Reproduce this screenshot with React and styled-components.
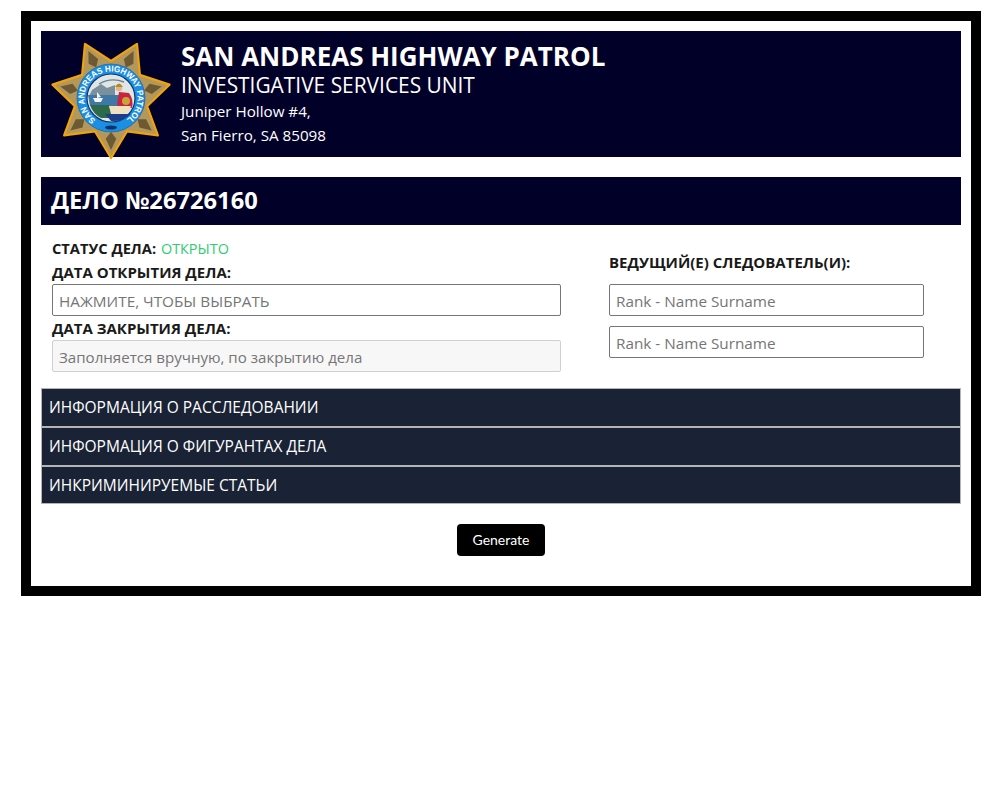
import React from 'react';
import styled, { createGlobalStyle } from 'styled-components';

const GlobalStyle = createGlobalStyle`
html, body {
  margin: 0;
  padding: 0;
  background: #fff;
}
body {
  font-family: "Open Sans", "Noto Sans", sans-serif;
  color: #1a1a1a;
}
`

const Frame = styled.div`
width: 960px;
margin: 11px 0 0 21px;
box-sizing: border-box;
border: 10px solid #000;
background: #fff;
padding: 10px 10px 30px;
`

const Header = styled.header`
height: 126px;
background: #000028;
display: flex;
color: #fff;
`

const Badge = styled.svg`
flex: none;
width: 120px;
height: 122px;
margin: 7px 10px 0 10px;
`

const HeaderText = styled.div`
display: flex;
flex-direction: column;
padding-top: 10px;
`

const Agency = styled.h1`
margin: 0;
font-size: 26px;
line-height: 31px;
font-weight: 700;
`

const Unit = styled.h2`
margin: 0 0 1px;
font-size: 20.9px;
line-height: 26px;
font-weight: 400;
`

const Address = styled.div`
font-size: 15.2px;
line-height: 24px;
`

const CaseBar = styled.h3`
margin: 20px 0 0;
height: 48px;
background: #000028;
color: #fff;
font-size: 23.7px;
line-height: 47px;
font-weight: 700;
padding-left: 10px;
`

const CaseInfo = styled.section`
display: grid;
grid-template-columns: 509px 315px;
column-gap: 48px;
padding: 12px 0 0 11px;
`

const Column = styled.div`
display: flex;
flex-direction: column;
`

const Line = styled.div`
font-size: ${props => props.$size || 15}px;
line-height: ${props => props.$leading || 24}px;
font-weight: 700;
height: ${props => props.$height || 24}px;
`

const Status = styled.span`
margin-left: 1px;
font-weight: 400;
font-size: 14.4px;
color: #2ecc71;
`

const Field = styled.input`
display: block;
box-sizing: border-box;
width: 100%;
height: 32px;
margin: 0;
padding: 2px 6px 0;
border: 1px solid #767676;
border-radius: 2px;
background: #fff;
font-family: inherit;
font-size: 15.3px;
margin-bottom: ${props => props.$gap || 0}px;

&::placeholder {
  color: #757575;
  opacity: 1;
}

&:disabled {
  background: #f7f7f7;
  border-color: #d0d0d0;
  font-size: 15.1px;
}
`

const RightLabel = styled(Line)`
margin-top: 14px;
height: 33px;
`

const Accordion = styled.div`
margin-top: 16px;
display: flex;
flex-direction: column;
`

const AccordionRow = styled.div`
box-sizing: border-box;
height: ${props => props.$last ? 38 : 39}px;
background: #1a2335;
border: 1px solid #b4b4b4;
color: #fff;
font-size: 15.5px;
line-height: 36px;
padding-left: 7px;
`

const Actions = styled.div`
display: flex;
justify-content: center;
padding-top: 20px;
`

const GenerateButton = styled.button`
width: 88px;
height: 32px;
border: 0;
border-radius: 4px;
background: #000;
color: #fff;
font-family: Lato, sans-serif;
font-size: 14px;
line-height: 30px;
padding: 0;
`

const CX = 60;
const CY = 60;

const polar = (r, a) => `${(CX + r * Math.cos(a)).toFixed(1)},${(CY + r * Math.sin(a)).toFixed(1)}`;

const starPoints = Array.from({ length: 14 }, (_, i) =>
  polar(i % 2 === 0 ? 60 : 37, Math.PI / 2 + (i * Math.PI) / 7)
).join(' ');

// dark creases in the middle of each arm of the star
const creases = Array.from({ length: 7 }, (_, i) => {
  const a = Math.PI / 2 + (i * 2 * Math.PI) / 7;
  return [polar(34, a), polar(41, a + 0.13), polar(52, a), polar(41, a - 0.13)].join(' ');
});

const HighwayBadge = () => (
  <Badge viewBox="0 0 120 122">
    <defs>
      <path id="ringText" d="M 44.8 81.7 A 26.5 26.5 0 1 1 75.2 81.7" />
    </defs>
    <polygon points={starPoints} fill="#b4975a" stroke="#efa30c" strokeWidth="2.2" strokeLinejoin="round" />
    {creases.map((points, i) => (
      <polygon key={i} points={points} fill="#3e3018" opacity="0.6" />
    ))}
    <circle cx="60" cy="60" r="34" fill="#1a8fe3" stroke="#0c5aa8" strokeWidth="0.6" />
    <text fontFamily="Liberation Sans, sans-serif" fontSize="8.6" fontWeight="700" fill="#fff">
      <textPath href="#ringText" textLength="133" lengthAdjust="spacingAndGlyphs">SAN ANDREAS HIGHWAY PATROL</textPath>
    </text>
    <ellipse cx="60" cy="89.5" rx="6" ry="2" fill="#0a3568" />
    <circle cx="60" cy="60" r="24" fill="#dfe6e4" stroke="#12356e" strokeWidth="1.2" />
    <path d="M41 52 L50 46 L56 50 L64 47 L64 58 L38 58 Z" fill="#7b8f9c" />
    <path d="M37 57 H70 V68 H39 Z" fill="#3f77a6" />
    <path d="M42 60 L52 60 L50 64 L44 64 Z" fill="#f4f6f6" />
    <path d="M46 60 V54 L50 59 Z" fill="#f4f6f6" />
    <path d="M39 67 H58 L62 80 H50 Q42 76 39 67 Z" fill="#2c6a4a" />
    <path d="M68 54 L78 55 Q83 62 81 70 L66 68 Z" fill="#c8243c" />
    <path d="M58 68 H80 L76 76 H60 Z" fill="#efe2c0" />
    <path d="M54 76 H80 Q72 84 60 83 Z" fill="#1d3f8a" />
    <circle cx="68" cy="50" r="3.2" fill="#e3b48a" />
    <path d="M64 49 Q68 42 72 49 Z" fill="#b58a1c" />
    <circle cx="75" cy="63" r="4" fill="#c9a23a" />
    <path d="M48 46 Q60 39 73 44" fill="none" stroke="#6a7f9a" strokeWidth="1.4" />
  </Badge>
);

export default function App() {
  return (
    <>
      <GlobalStyle />
      <Frame>
        <Header>
          <HighwayBadge />
          <HeaderText>
            <Agency>SAN ANDREAS HIGHWAY PATROL</Agency>
            <Unit>INVESTIGATIVE SERVICES UNIT</Unit>
            <Address>Juniper Hollow #4,</Address>
            <Address>San Fierro, SA 85098</Address>
          </HeaderText>
        </Header>
        <CaseBar>ДЕЛО №26726160</CaseBar>
        <CaseInfo>
          <Column>
            <Line $size={14.7} $leading={22}>СТАТУС ДЕЛА: <Status>ОТКРЫТО</Status></Line>
            <Line $height={23} $leading={22}>ДАТА ОТКРЫТИЯ ДЕЛА:</Line>
            <Field placeholder="НАЖМИТЕ, ЧТОБЫ ВЫБРАТЬ" />
            <Line>ДАТА ЗАКРЫТИЯ ДЕЛА:</Line>
            <Field disabled placeholder="Заполняется вручную, по закрытию дела" />
          </Column>
          <Column>
            <RightLabel $leading={22}>ВЕДУЩИЙ(Е) СЛЕДОВАТЕЛЬ(И):</RightLabel>
            <Field $gap={10} placeholder="Rank - Name Surname" />
            <Field placeholder="Rank - Name Surname" />
          </Column>
        </CaseInfo>
        <Accordion>
          <AccordionRow>ИНФОРМАЦИЯ О РАССЛЕДОВАНИИ</AccordionRow>
          <AccordionRow>ИНФОРМАЦИЯ О ФИГУРАНТАХ ДЕЛА</AccordionRow>
          <AccordionRow $last>ИНКРИМИНИРУЕМЫЕ СТАТЬИ</AccordionRow>
        </Accordion>
        <Actions>
          <GenerateButton>Generate</GenerateButton>
        </Actions>
      </Frame>
    </>
  );
}
